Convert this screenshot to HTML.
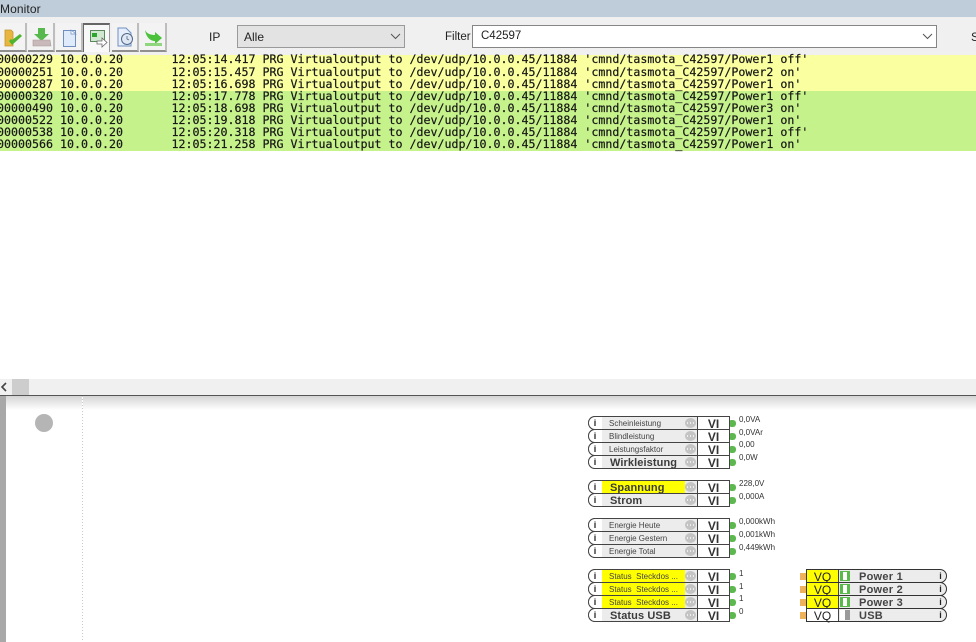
<!DOCTYPE html>
<html><head><meta charset="utf-8"><style>
html,body{margin:0;padding:0;background:#fff}
#p{position:relative;width:976px;height:642px;overflow:hidden;background:#fff;font-family:"Liberation Sans",sans-serif;color:#222}
#p div,#p span,#p svg{position:absolute}
.btn{top:23px;height:29px;width:27px;background:#f3f3f3;border-right:2px solid #bdbdbd;border-bottom:2px solid #8f8f8f;box-sizing:border-box}
.lbl{font-size:12px;line-height:14px;color:#222}
.r{left:0;width:976px;height:12px}
.l{font-family:"DejaVu Sans Mono",monospace;font-size:11.63px;line-height:12px;white-space:pre;color:#161616;left:0;height:12px;-webkit-text-stroke:.2px #161616}
.l span{top:0}
.in{left:588px;width:142px;height:14px;box-sizing:border-box;border:1px solid #444;border-left:0;background:#ececec;border-radius:7px 0 0 7px}
.in:before{content:"";position:absolute;left:0;top:-1px;width:13px;height:12px;border:1px solid #444;border-right:0;border-radius:7px 0 0 7px;background:#fff;box-sizing:content-box}
.in .i{left:4px;top:0;width:6px;font:bold 9px/12px "Liberation Sans",sans-serif;color:#222;text-align:center}
.in .y{left:14px;top:0;width:83px;height:12px;background:#ffff00}
.in .t{left:21px;top:1px;font-size:8px;line-height:12px;color:#444;white-space:nowrap}
.in .b{left:22px;top:1px;font:bold 11px/13px "Liberation Sans",sans-serif;color:#3c3c3c;white-space:nowrap;letter-spacing:.1px}
.in .d{left:97px;top:1px;width:11px;height:10px;border-radius:50%;background:#c4c4c4}
.in .d:after{content:"";position:absolute;left:2px;top:4px;width:7px;height:2px;background:repeating-linear-gradient(90deg,#eee 0 1px,transparent 1px 3px)}
.in .v{left:109px;top:0;width:31px;height:12px;background:#fff;border-left:1px solid #444;font:bold 12px/14px "Liberation Sans",sans-serif;text-align:center;color:#333}
.pt{left:730px;width:6px;height:7px;background:#5db84f;border-radius:1px 3px 3px 1px}
.val{left:739px;font-size:8px;line-height:10px;color:#333;white-space:nowrap}
.o{left:806px;width:141px;height:14px;box-sizing:border-box;border:1px solid #333;background:#ececec;border-radius:0 7px 7px 0}
.o .v{left:0;top:0;width:31px;height:12px;border-right:1px solid #444;font:12px/14px "Liberation Sans",sans-serif;text-align:center;color:#222}
.o .s{left:33px;top:1px;width:10px;height:10px;background:#59b94a}
.o .s i{position:absolute;left:3px;top:1px;width:4px;height:8px;background:#fff}
.o .n{left:52px;top:1px;font:bold 11px/13px "Liberation Sans",sans-serif;color:#444;white-space:nowrap;letter-spacing:.25px}
.o .e{left:129px;top:0;width:9px;height:12px;font:bold 9px/12px "Liberation Sans",sans-serif;text-align:center;color:#222}
.ar{left:800px;width:6px;height:7px;background:#eeb25c}
</style></head><body><div id="p">
<div style="left:0;top:0;width:976px;height:17px;background:#bfccd9"></div>
<div class="lbl" style="left:0;top:2px;font-size:12px;letter-spacing:.1px;color:#222">Monitor</div>
<div style="left:0;top:17px;width:976px;height:38px;background:#f0f0f0"></div>

<div class="btn" style="left:0"></div>
<div class="btn" style="left:28px"></div>
<div class="btn" style="left:56px"></div>
<div class="btn" style="left:83px;background:#f8f8f8;border:1px solid #666;border-top:2px solid #666;border-bottom:0;border-right:1px solid #999"></div>
<div class="btn" style="left:112px"></div>
<div class="btn" style="left:140px"></div>

<svg style="left:0;top:24px" width="170" height="26" viewBox="0 0 170 26">
<path d="M5 6h6l2 2v14H5z" fill="#e8b53f" stroke="#c29530" stroke-width=".8"/>
<path d="M9 17l3 4 10-9-2-2-8 6-1-1z" fill="#4fb52f"/>
<path d="M38 4h7v6h4l-7.500 7-7.500-7h4z" fill="#56b84d"/>
<path d="M33 16h17l1 6H33z" fill="#c9b9bb" stroke="#a99" stroke-width=".6"/>
<rect x="63.500" y="6.500" width="12" height="16" fill="#dfeafa" stroke="#6f8fc0"/>
<path d="M71 6l5 4h-5z" fill="#fff" stroke="#6f8fc0" stroke-width=".7"/>
<rect x="90.500" y="6.500" width="14" height="11" fill="#cfe8cf" stroke="#5a8a5a"/>
<rect x="92" y="9" width="5" height="4" fill="#2fa52f"/>
<path d="M97 17h5v-3l5 4.500-5 4.500v-3h-5z" fill="#fff" stroke="#666" stroke-width=".8"/>
<path d="M118 4h8l5 5v13h-13z" fill="#e6eefb" stroke="#6f8fc0"/>
<circle cx="127" cy="15" r="5.500" fill="#dfe7f3" stroke="#51688c"/>
<path d="M127 12v3l2 1" fill="none" stroke="#51688c" stroke-width=".8"/>
<path d="M145 6c2 4 6 5 10 5v-3l7 6-7 6v-3c-5 0-9-4-10-11z" fill="#4cc23c"/>
<path d="M145 19h17v3h-17z" fill="#8fd67f"/>
</svg>

<div class="lbl" style="left:209px;top:30px">IP</div>
<div style="left:237px;top:25px;width:168px;height:23px;box-sizing:border-box;background:#e3e3e3;border:1px solid #9a9a9a"></div>
<div class="lbl" style="left:244px;top:30px">Alle</div>
<svg style="left:390px;top:33px" width="11" height="7"><path d="M1 1l4.500 4.500L10 1" fill="none" stroke="#555"/></svg>
<div class="lbl" style="left:445px;top:30px;font-size:11.5px">Filter</div>
<div style="left:472px;top:25px;width:465px;height:23px;box-sizing:border-box;background:#fff;border:1px solid #858585"></div>
<div class="lbl" style="left:481px;top:29px;font-size:11.5px">C42597</div>
<svg style="left:922px;top:33px" width="11" height="7"><path d="M1 1l4.500 4.500L10 1" fill="none" stroke="#555"/></svg>
<div class="lbl" style="left:971px;top:30px">S</div>

<div class="r" style="top:55px;height:36px;background:#faffa0"></div>
<div class="r" style="top:91px;height:60px;background:#c6f28c"></div>

<div class="l" style="top:53px"><span style="left:-3px">00000229 10.0.0.20</span><span style="left:171.500px">12:05:14.417 PRG Virtualoutput to /dev/udp/10.0.0.45/11884 'cmnd/tasmota_C42597/Power1 off'</span></div>
<div class="l" style="top:66px"><span style="left:-3px">00000251 10.0.0.20</span><span style="left:171.500px">12:05:15.457 PRG Virtualoutput to /dev/udp/10.0.0.45/11884 'cmnd/tasmota_C42597/Power2 on'</span></div>
<div class="l" style="top:78px"><span style="left:-3px">00000287 10.0.0.20</span><span style="left:171.500px">12:05:16.698 PRG Virtualoutput to /dev/udp/10.0.0.45/11884 'cmnd/tasmota_C42597/Power1 on'</span></div>
<div class="l" style="top:90px"><span style="left:-3px">00000320 10.0.0.20</span><span style="left:171.500px">12:05:17.778 PRG Virtualoutput to /dev/udp/10.0.0.45/11884 'cmnd/tasmota_C42597/Power1 off'</span></div>
<div class="l" style="top:102px"><span style="left:-3px">00000490 10.0.0.20</span><span style="left:171.500px">12:05:18.698 PRG Virtualoutput to /dev/udp/10.0.0.45/11884 'cmnd/tasmota_C42597/Power3 on'</span></div>
<div class="l" style="top:114px"><span style="left:-3px">00000522 10.0.0.20</span><span style="left:171.500px">12:05:19.818 PRG Virtualoutput to /dev/udp/10.0.0.45/11884 'cmnd/tasmota_C42597/Power1 on'</span></div>
<div class="l" style="top:126px"><span style="left:-3px">00000538 10.0.0.20</span><span style="left:171.500px">12:05:20.318 PRG Virtualoutput to /dev/udp/10.0.0.45/11884 'cmnd/tasmota_C42597/Power1 off'</span></div>
<div class="l" style="top:138px"><span style="left:-3px">00000566 10.0.0.20</span><span style="left:171.500px">12:05:21.258 PRG Virtualoutput to /dev/udp/10.0.0.45/11884 'cmnd/tasmota_C42597/Power1 on'</span></div>

<div style="left:0;top:379px;width:976px;height:16px;background:#f0f0f0"></div>
<div style="left:12px;top:379px;width:17px;height:16px;background:#cdcdcd"></div>
<svg style="left:0;top:382px" width="8" height="10"><path d="M6 1L2 5l4 4" fill="none" stroke="#444" stroke-width="1.600"/></svg>
<div style="left:0;top:395px;width:976px;height:1px;background:#555"></div>
<div style="left:0;top:396px;width:976px;height:14px;background:linear-gradient(#d4d4d4,#fff)"></div>
<div style="left:0;top:396px;width:6px;height:246px;background:#a8a8a8"></div>
<div style="left:82px;top:396px;width:1px;height:246px;background:repeating-linear-gradient(#c9c9c9 0 1px,#fff 1px 3px)"></div>
<div style="left:35px;top:414px;width:18px;height:18px;border-radius:50%;background:#b5b5b5"></div>

<div class="in" style="top:416px"><span class="i">i</span><span class="t">Scheinleistung</span><span class="d"></span><span class="v">VI</span></div>
<div class="in" style="top:429px"><span class="i">i</span><span class="t">Blindleistung</span><span class="d"></span><span class="v">VI</span></div>
<div class="in" style="top:442px"><span class="i">i</span><span class="t">Leistungsfaktor</span><span class="d"></span><span class="v">VI</span></div>
<div class="in" style="top:455px"><span class="i">i</span><span class="b">Wirkleistung</span><span class="d"></span><span class="v">VI</span></div>

<div class="in" style="top:480px"><span class="i">i</span><span class="y"></span><span class="b">Spannung</span><span class="d"></span><span class="v">VI</span></div>
<div class="in" style="top:493px"><span class="i">i</span><span class="b">Strom</span><span class="d"></span><span class="v">VI</span></div>

<div class="in" style="top:518px"><span class="i">i</span><span class="t">Energie Heute</span><span class="d"></span><span class="v">VI</span></div>
<div class="in" style="top:531px"><span class="i">i</span><span class="t">Energie Gestern</span><span class="d"></span><span class="v">VI</span></div>
<div class="in" style="top:544px"><span class="i">i</span><span class="t">Energie Total</span><span class="d"></span><span class="v">VI</span></div>

<div class="in" style="top:569px"><span class="i">i</span><span class="y"></span><span class="t">Status&nbsp; Steckdos ...</span><span class="d"></span><span class="v">VI</span></div>
<div class="in" style="top:582px"><span class="i">i</span><span class="y"></span><span class="t">Status&nbsp; Steckdos ...</span><span class="d"></span><span class="v">VI</span></div>
<div class="in" style="top:595px"><span class="i">i</span><span class="y"></span><span class="t">Status&nbsp; Steckdos ...</span><span class="d"></span><span class="v">VI</span></div>
<div class="in" style="top:608px"><span class="i">i</span><span class="b">Status USB</span><span class="d"></span><span class="v">VI</span></div>

<div class="pt" style="top:420px"></div><div class="pt" style="top:433px"></div><div class="pt" style="top:446px"></div><div class="pt" style="top:459px"></div>
<div class="pt" style="top:484px"></div><div class="pt" style="top:497px"></div>
<div class="pt" style="top:522px"></div><div class="pt" style="top:535px"></div><div class="pt" style="top:548px"></div>
<div class="pt" style="top:573px"></div><div class="pt" style="top:586px"></div><div class="pt" style="top:599px"></div><div class="pt" style="top:612px"></div>

<div class="val" style="top:415px">0,0VA</div>
<div class="val" style="top:428px">0,0VAr</div>
<div class="val" style="top:440px">0,00</div>
<div class="val" style="top:453px">0,0W</div>
<div class="val" style="top:479px">228,0V</div>
<div class="val" style="top:492px">0,000A</div>
<div class="val" style="top:517px">0,000kWh</div>
<div class="val" style="top:530px">0,001kWh</div>
<div class="val" style="top:543px">0,449kWh</div>
<div class="val" style="top:569px">1</div>
<div class="val" style="top:582px">1</div>
<div class="val" style="top:594px">1</div>
<div class="val" style="top:607px">0</div>

<div class="ar" style="top:573px"></div><div class="ar" style="top:586px"></div><div class="ar" style="top:599px"></div><div class="ar" style="top:612px"></div>

<div class="o" style="top:569px"><span class="v" style="background:#ffff00">VQ</span><span class="s"><i></i></span><span class="n">Power 1</span><span class="e">i</span></div>
<div class="o" style="top:582px"><span class="v" style="background:#ffff00">VQ</span><span class="s"><i></i></span><span class="n">Power 2</span><span class="e">i</span></div>
<div class="o" style="top:595px"><span class="v" style="background:#ffff00">VQ</span><span class="s"><i></i></span><span class="n">Power 3</span><span class="e">i</span></div>
<div class="o" style="top:608px"><span class="v" style="background:#fff">VQ</span><span class="s" style="background:#9a9a9a"><i style="left:0;top:0;width:5px;height:10px;background:#fff"></i></span><span class="n">USB</span><span class="e">i</span></div>
</div></body></html>
